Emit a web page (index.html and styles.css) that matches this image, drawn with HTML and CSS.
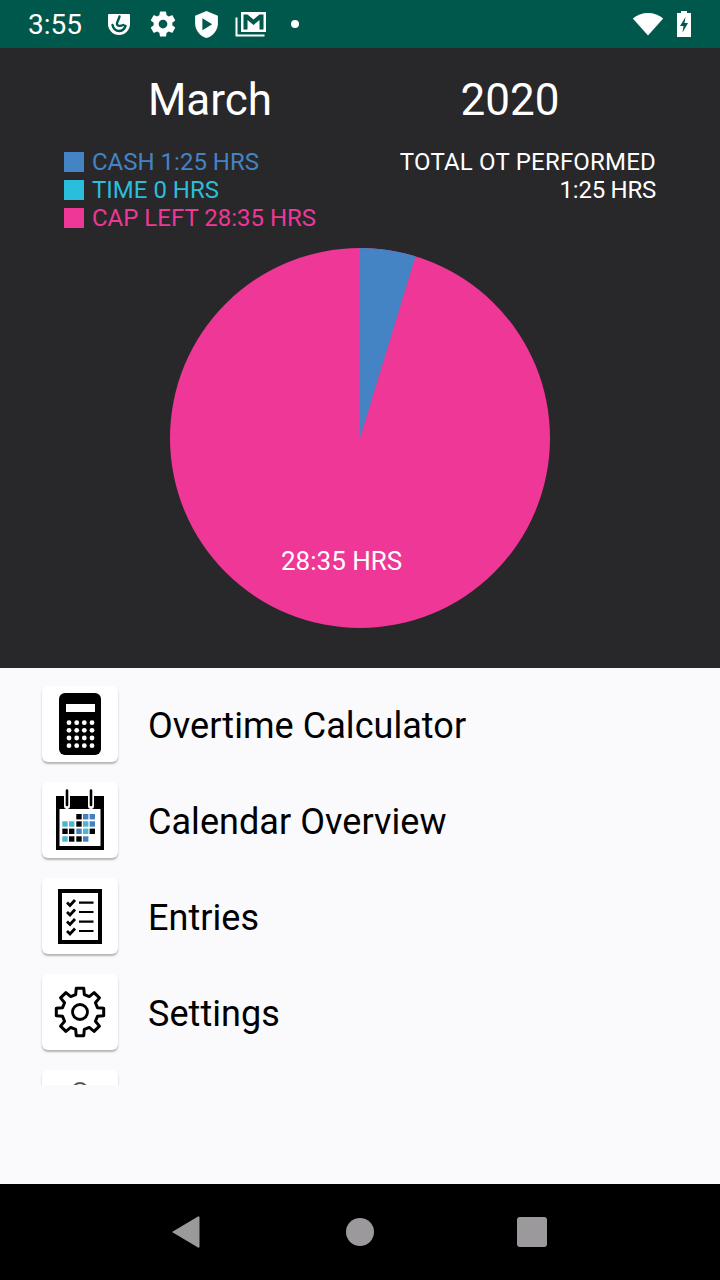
FILE: index.html
```html
<!DOCTYPE html>
<html lang="en">
<head>
  <meta charset="UTF-8" />
  <meta name="viewport" content="width=device-width, initial-scale=1.0"/>
  <title>Overtime</title>
  <link rel="stylesheet" href="styles.css">
</head>
<body>
  <div class="phone">
    <div class="status-bar">
      <span class="clock">3:55</span>
      <div class="status-icons">
        <svg width="26" height="26" viewBox="0 0 26 26"><path fill="#fff" d="M3 3h20a1 1 0 0 1 1 1v9a11 11 0 0 1-22 0V4a1 1 0 0 1 1-1z"/><path fill="none" stroke="#00574b" stroke-width="2.4" stroke-linecap="round" d="M13.500 5.500c-1 4-3 6-2.500 8 .5 2 4 1.500 6.500 .5M6.500 14c1 4 3.500 6 6.500 6s5.500-2 6.500-5"/></svg>
        <svg width="30" height="30" viewBox="0 0 24 24"><path fill="#fff" d="M19.430 12.980c.04-.32.07-.64.07-.98s-.03-.66-.07-.98l2.110-1.650c.19-.15.24-.42.12-.64l-2-3.460c-.12-.22-.39-.3-.61-.22l-2.490 1c-.52-.4-1.080-.73-1.690-.98l-.38-2.650C14.460 2.180 14.250 2 14 2h-4c-.25 0-.46.18-.49.42l-.38 2.650c-.61.25-1.170.59-1.690.98l-2.490-1c-.23-.09-.49 0-.61.220l-2 3.460c-.13.22-.07.49.12.64l2.110 1.650c-.04.32-.07.650-.07.980s.03.66.07.98l-2.110 1.650c-.19.15-.24.42-.12.64l2 3.460c.12.22.39.3.61.22l2.490-1c.52.4 1.080.73 1.690.98l.38 2.650c.03.24.24.42.49.42h4c.25 0 .46-.18.49-.42l.38-2.650c.61-.25 1.170-.59 1.690-.98l2.490 1c.23.09.49 0 .61-.22l2-3.460c.12-.22.07-.49-.12-.64l-2.110-1.650zM12 15.500c-1.930 0-3.500-1.570-3.500-3.500s1.570-3.500 3.500-3.500 3.500 1.570 3.500 3.500-1.570 3.500-3.500 3.500z"/></svg>
        <svg width="25" height="29" viewBox="0 0 24 28"><path fill="#fff" d="M12 1 1 5.500V13c0 6.500 4.700 12.300 11 14 6.300-1.700 11-7.500 11-14V5.500z"/><path fill="#00574b" d="M8 8v11.500l9.500-5.750z"/></svg>
        <svg class="mail" width="32" height="26" viewBox="0 0 32 26"><path fill="none" stroke="#fff" stroke-width="2" d="M1.500 6.500v18h28"/><path fill="#fff" d="M6 1h25v20H6z"/><path fill="#00574b" d="M8.500 3.500h4l6 5 6-5h4v15h-4V9l-6 5-6-5v9.500h-4z"/></svg>
        <span class="dot"></span>
      </div>
      <div class="status-right">
        <svg width="32" height="24" viewBox="0 0 32 24"><path fill="#fff" d="M16 23.500 .800 6.500C5 3 10 1 16 1s11 2 15.200 5.500z"/></svg>
        <svg width="16" height="28" viewBox="0 0 16 28"><path fill="#fff" fill-rule="evenodd" d="M5 1h6v2h4v24H1V3h4zM9.500 7 4 16h3.500l-1 6.500L12 13H8.500z"/></svg>
      </div>
    </div>

    <section class="summary">
      <div class="period">
        <span>March</span>
        <span>2020</span>
      </div>
      <div class="stats">
        <ul class="legend">
          <li class="cash"><i></i>CASH 1:25 HRS</li>
          <li class="time"><i></i>TIME 0 HRS</li>
          <li class="cap"><i></i>CAP LEFT 28:35 HRS</li>
        </ul>
        <div class="total"><span class="total-title">TOTAL OT PERFORMED</span><br>1:25 HRS</div>
      </div>
      <div class="pie">
        <svg width="380" height="380" viewBox="0 0 380 380">
          <circle cx="190" cy="190" r="190" fill="#ee3797"/>
          <path fill="#4483c4" d="M190 190V0A190 190 0 0 1 245.500 8.300z"/>
        </svg>
        <span class="pie-label">28:35 HRS</span>
      </div>
    </section>

    <section class="menu">
      <div class="menu-list">
        <div class="menu-item">
          <div class="tile">
            <svg width="42" height="62" viewBox="0 0 42 62">
              <rect width="42" height="62" rx="6"/>
              <rect x="7" y="11" width="29" height="8" fill="#fff"/>
              <g fill="#fff">
                <circle cx="10" cy="29.700" r="2.400"/><circle cx="17.700" cy="29.700" r="2.400"/><circle cx="25.300" cy="29.700" r="2.400"/><circle cx="33" cy="29.700" r="2.400"/>
                <circle cx="10" cy="37.300" r="2.400"/><circle cx="17.700" cy="37.300" r="2.400"/><circle cx="25.300" cy="37.300" r="2.400"/><circle cx="33" cy="37.300" r="2.400"/>
                <circle cx="10" cy="45" r="2.400"/><circle cx="17.700" cy="45" r="2.400"/><circle cx="25.300" cy="45" r="2.400"/><circle cx="33" cy="45" r="2.400"/>
                <circle cx="10" cy="52.700" r="2.400"/><circle cx="17.700" cy="52.700" r="2.400"/><circle cx="25.300" cy="52.700" r="2.400"/><circle cx="33" cy="52.700" r="2.400"/>
              </g>
            </svg>
          </div>
          <span>Overtime Calculator</span>
        </div>
        <div class="menu-item">
          <div class="tile">
            <svg width="48" height="62" viewBox="0 0 48 62">
              <path d="M0 7h48v54H0z"/>
              <rect x="3.500" y="20" width="41" height="37" fill="#fff"/>
              <path fill="none" stroke="#fff" stroke-width="6" stroke-linecap="round" d="M11 7v10M35 7v10"/>
              <path fill="none" stroke="#000" stroke-width="2.600" stroke-linecap="round" d="M11 1.500v14.500M35 1.500v14.500"/>
              <g>
                <rect x="20.300" y="25" width="5.400" height="5.400"/><rect x="27" y="25" width="5.400" height="5.400" fill="#4680bd"/><rect x="33.600" y="25" width="5.400" height="5.400" fill="#4680bd"/>
                <rect x="6.300" y="32.300" width="5.400" height="5.400" fill="#4bb6cf"/><rect x="13" y="32.300" width="5.400" height="5.400" fill="#4bb6cf"/><rect x="20.300" y="32.300" width="5.400" height="5.400"/><rect x="27" y="32.300" width="5.400" height="5.400" fill="#4bb6cf"/><rect x="33.600" y="32.300" width="5.400" height="5.400" fill="#4680bd"/>
                <rect x="6.300" y="39.600" width="5.400" height="5.400"/><rect x="13" y="39.600" width="5.400" height="5.400"/><rect x="20.300" y="39.600" width="5.400" height="5.400" fill="#4680bd"/><rect x="27" y="39.600" width="5.400" height="5.400" fill="#4bb6cf"/><rect x="33.600" y="39.600" width="5.400" height="5.400"/>
                <rect x="6.300" y="47.300" width="5.400" height="5.400" fill="#4bb6cf"/><rect x="13" y="47.300" width="5.400" height="5.400"/><rect x="20.300" y="47.300" width="5.400" height="5.400"/><rect x="27" y="47.300" width="5.400" height="5.400" fill="#4680bd"/>
              </g>
            </svg>
          </div>
          <span>Calendar Overview</span>
        </div>
        <div class="menu-item">
          <div class="tile">
            <svg width="44" height="55" viewBox="0 0 44 55">
              <rect x="2" y="2" width="40" height="51" fill="#fff" stroke="#000" stroke-width="4"/>
              <g fill="none" stroke="#000">
                <path stroke-width="2.800" d="M9 13.500l3 3 5-5.500M9 23l3 3 5-5.500M9 32.500l3 3 5-5.500M9 42l3 3 5-5.500"/>
                <path stroke-width="2.200" d="M21 13.700h14.500M21 23h14.500M21 32.700h14.500M21 42h14.500"/>
              </g>
            </svg>
          </div>
          <span>Entries</span>
        </div>
        <div class="menu-item">
          <div class="tile">
            <svg width="52" height="52" viewBox="-26 -26 52 52">
              <polygon fill="none" stroke="#000" stroke-width="3" stroke-linejoin="round" points="-4.350,-17.470 -3.750,-23.700 3.750,-23.700 4.350,-17.470 9.280,-15.430 14.110,-19.410 19.410,-14.110 15.430,-9.280 17.470,-4.350 23.700,-3.750 23.700,3.750 17.470,4.350 15.430,9.280 19.410,14.110 14.110,19.410 9.280,15.430 4.350,17.470 3.750,23.700 -3.750,23.700 -4.350,17.470 -9.280,15.430 -14.110,19.410 -19.410,14.110 -15.430,9.280 -17.470,4.350 -23.700,3.750 -23.700,-3.750 -17.470,-4.350 -15.430,-9.280 -19.410,-14.110 -14.110,-19.410 -9.280,-15.430"/>
              <circle r="7.500" fill="none" stroke="#000" stroke-width="2.800"/>
            </svg>
          </div>
          <span>Settings</span>
        </div>
        <div class="menu-item">
          <div class="tile">
            <svg width="52" height="52" viewBox="0 0 52 52"><circle cx="26" cy="8" r="7" fill="none" stroke="#555" stroke-width="2"/></svg>
          </div>
        </div>
      </div>
    </section>

    <nav class="nav-bar">
      <svg width="28" height="32" viewBox="0 0 28 32"><path fill="#9b999b" d="M26 0.500a1 1 0 0 1 1.500 1V30.500a1 1 0 0 1-1.500 1L.800 16.500a.5.5 0 0 1 0-1z"/></svg>
      <span class="home"></span>
      <span class="recent"></span>
    </nav>
  </div>
</body>
</html>
```

FILE: styles.css
```css
* {
  box-sizing: border-box;
}

body {
  margin: 0;
  font-family: Roboto, sans-serif;
  background: #000;
}

.phone {
  width: 720px;
  height: 1280px;
  display: flex;
  flex-direction: column;
  overflow: hidden;
}

/* status bar */
.status-bar {
  height: 48px;
  flex: none;
  display: flex;
  align-items: center;
  padding: 0 28px;
  background: #00574b;
  color: #fff;
}

.clock {
  font-size: 28px;
  width: 78px;
}

.status-icons {
  display: flex;
  align-items: center;
  gap: 16px;
}

.status-icons .dot {
  width: 8px;
  height: 8px;
  border-radius: 50%;
  background: #fff;
  margin-left: 8px;
}

.status-right {
  margin-left: auto;
  display: flex;
  align-items: center;
  gap: 12px;
}

/* dark summary panel */
.summary {
  height: 620px;
  flex: none;
  background: #282729;
  color: #fff;
}

.period {
  display: grid;
  grid-template-columns: 300px 300px;
  justify-content: center;
  padding: 24px 0 0;
  text-align: center;
  font-size: 44px;
  line-height: 56px;
}

.stats {
  display: flex;
  justify-content: space-between;
  padding: 0 64px;
  margin-top: 20px;
  font-size: 24px;
  line-height: 28px;
}

.legend {
  list-style: none;
  margin: 0;
  padding: 0;
}

.legend li {
  display: flex;
  align-items: center;
  gap: 8px;
}

.legend i {
  width: 20px;
  height: 20px;
}

.cash { color: #4483c4; }
.cash i { background: #4483c4; }
.time { color: #2abedc; }
.time i { background: #2abedc; }
.cap { color: #ee3797; }
.cap i { background: #ee3797; }

.total {
  text-align: right;
  letter-spacing: -0.25px;
}

.total-title {
  letter-spacing: 0.2px;
}

.pie {
  position: relative;
  width: 380px;
  height: 380px;
  margin: 16px auto 0;
}

.pie svg {
  display: block;
}

.pie-label {
  position: absolute;
  left: 111px;
  top: 298px;
  font-size: 26px;
  line-height: 30px;
}

/* menu */
.menu {
  flex: 1;
  background: #faf9fc;
}

.menu-list {
  height: 417px;
  overflow: hidden;
  padding: 18px 0 0 42px;
  display: flex;
  flex-direction: column;
  gap: 20px;
}

.menu-item {
  display: flex;
  flex: none;
  align-items: center;
  gap: 30px;
  height: 76px;
  font-size: 36px;
  letter-spacing: 0.05px;
  color: #000;
}

.menu-item span {
  margin-top: 4px;
}

.tile {
  width: 76px;
  height: 76px;
  flex: none;
  display: flex;
  align-items: center;
  justify-content: center;
  background: #fff;
  border-radius: 6px;
  box-shadow: 0 2px 2px rgba(0, 0, 0, 0.28);
}

/* nav bar */
.nav-bar {
  height: 96px;
  flex: none;
  position: relative;
  background: #000;
}

.nav-bar svg {
  position: absolute;
  left: 172px;
  top: 32px;
}

.home {
  position: absolute;
  left: 346px;
  top: 34px;
  width: 28px;
  height: 28px;
  border-radius: 50%;
  background: #9b999b;
}

.recent {
  position: absolute;
  left: 517px;
  top: 33px;
  width: 30px;
  height: 30px;
  border-radius: 3px;
  background: #9b999b;
}
```
